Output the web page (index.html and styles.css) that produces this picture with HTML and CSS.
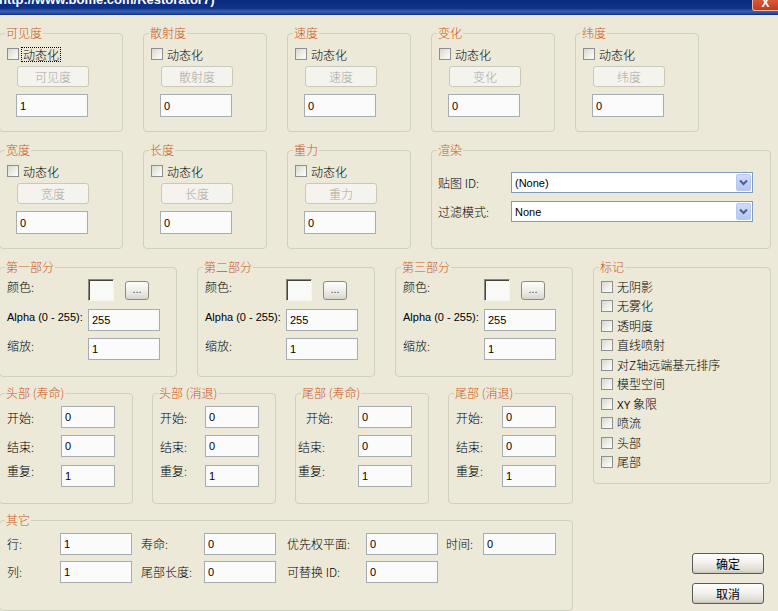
FILE: index.html
```html
<!DOCTYPE html>
<html lang="zh-CN">
<head>
<meta charset="utf-8">
<title>粒子发射器</title>
<link rel="stylesheet" href="styles.css">
</head>
<body>
<div class="titlebar">
  <span class="title">http://www.bome.com/Restorator7)</span>
  <span class="close">X</span>
</div>
<div class="dialog">
  <div class="row row1">
    <div class="group small">
      <span class="legend">可见度</span>
      <div class="chkline"><input type="checkbox" class="chk"><span class="chklabel focus">动态化</span></div>
      <button class="dbtn" disabled>可见度</button>
      <input class="edit e72 tall" value="1">
    </div>
    <div class="group small">
      <span class="legend">散射度</span>
      <div class="chkline"><input type="checkbox" class="chk"><span class="chklabel">动态化</span></div>
      <button class="dbtn" disabled>散射度</button>
      <input class="edit e72 tall" value="0">
    </div>
    <div class="group small">
      <span class="legend">速度</span>
      <div class="chkline"><input type="checkbox" class="chk"><span class="chklabel">动态化</span></div>
      <button class="dbtn" disabled>速度</button>
      <input class="edit e72 tall" value="0">
    </div>
    <div class="group small">
      <span class="legend">变化</span>
      <div class="chkline"><input type="checkbox" class="chk"><span class="chklabel">动态化</span></div>
      <button class="dbtn" disabled>变化</button>
      <input class="edit e72 tall" value="0">
    </div>
    <div class="group small">
      <span class="legend">纬度</span>
      <div class="chkline"><input type="checkbox" class="chk"><span class="chklabel">动态化</span></div>
      <button class="dbtn" disabled>纬度</button>
      <input class="edit e72 tall" value="0">
    </div>
  </div>

  <div class="row row2">
    <div class="group small">
      <span class="legend">宽度</span>
      <div class="chkline"><input type="checkbox" class="chk"><span class="chklabel">动态化</span></div>
      <button class="dbtn" disabled>宽度</button>
      <input class="edit e72 tall" value="0">
    </div>
    <div class="group small">
      <span class="legend">长度</span>
      <div class="chkline"><input type="checkbox" class="chk"><span class="chklabel">动态化</span></div>
      <button class="dbtn" disabled>长度</button>
      <input class="edit e72 tall" value="0">
    </div>
    <div class="group small">
      <span class="legend">重力</span>
      <div class="chkline"><input type="checkbox" class="chk"><span class="chklabel">动态化</span></div>
      <button class="dbtn" disabled>重力</button>
      <input class="edit e72 tall" value="0">
    </div>
    <div class="group render">
      <span class="legend">渲染</span>
      <div class="rline">
        <span class="rlabel">贴图 ID:</span>
        <div class="combo"><span class="combo-text">(None)</span><span class="drop"><svg width="9" height="7" viewBox="0 0 9 7"><path d="M1 1.5 L4.5 5 L8 1.5" fill="none" stroke="#4d6185" stroke-width="2"/></svg></span></div>
      </div>
      <div class="rline second">
        <span class="rlabel">过滤模式:</span>
        <div class="combo"><span class="combo-text">None</span><span class="drop"><svg width="9" height="7" viewBox="0 0 9 7"><path d="M1 1.5 L4.5 5 L8 1.5" fill="none" stroke="#4d6185" stroke-width="2"/></svg></span></div>
      </div>
    </div>
  </div>

  <div class="lower">
    <div class="leftcol">
      <div class="row row3">
        <div class="group part">
          <span class="legend">第一部分</span>
          <div class="prow"><span class="plabel">颜色:</span><span class="swatch"></span><button class="dots">...</button></div>
          <div class="prow pb"><span class="plabel latin">Alpha (0 - 255):</span><input class="edit e72" value="255"></div>
          <div class="prow pc"><span class="plabel">缩放:</span><input class="edit e72" value="1"></div>
        </div>
        <div class="group part">
          <span class="legend">第二部分</span>
          <div class="prow"><span class="plabel">颜色:</span><span class="swatch"></span><button class="dots">...</button></div>
          <div class="prow pb"><span class="plabel latin">Alpha (0 - 255):</span><input class="edit e72" value="255"></div>
          <div class="prow pc"><span class="plabel">缩放:</span><input class="edit e72" value="1"></div>
        </div>
        <div class="group part">
          <span class="legend">第三部分</span>
          <div class="prow"><span class="plabel">颜色:</span><span class="swatch"></span><button class="dots">...</button></div>
          <div class="prow pb"><span class="plabel latin">Alpha (0 - 255):</span><input class="edit e72" value="255"></div>
          <div class="prow pc"><span class="plabel">缩放:</span><input class="edit e72" value="1"></div>
        </div>
      </div>

      <div class="row row4">
        <div class="group seg w134">
          <span class="legend">头部 (寿命)</span>
          <div class="srow"><span class="slabel lw54">开始:</span><input class="edit e54" value="0"></div>
          <div class="srow s2"><span class="slabel lw54">结束:</span><input class="edit e54" value="0"></div>
          <div class="srow s3"><span class="slabel lw54">重复:</span><input class="edit e54" value="1"></div>
        </div>
        <div class="group seg w124">
          <span class="legend">头部 (消退)</span>
          <div class="srow"><span class="slabel lw45">开始:</span><input class="edit e54" value="0"></div>
          <div class="srow s2"><span class="slabel lw45">结束:</span><input class="edit e54" value="0"></div>
          <div class="srow s3"><span class="slabel lw45">重复:</span><input class="edit e54" value="1"></div>
        </div>
        <div class="group seg w134">
          <span class="legend">尾部 (寿命)</span>
          <div class="srow"><span class="slabel lw55 nudge-r">开始:</span><input class="edit e54" value="0"></div>
          <div class="srow s2"><span class="slabel lw55 nudge-l">结束:</span><input class="edit e54" value="0"></div>
          <div class="srow s3"><span class="slabel lw55 nudge-l">重复:</span><input class="edit e54" value="1"></div>
        </div>
        <div class="group seg w125">
          <span class="legend">尾部 (消退)</span>
          <div class="srow"><span class="slabel lw46">开始:</span><input class="edit e54" value="0"></div>
          <div class="srow s2"><span class="slabel lw46">结束:</span><input class="edit e54" value="0"></div>
          <div class="srow s3"><span class="slabel lw46">重复:</span><input class="edit e54" value="1"></div>
        </div>
      </div>

      <div class="group other">
        <span class="legend">其它</span>
        <div class="orow">
          <span class="olabel ow53">行:</span><input class="edit e72" value="1">
          <span class="olabel ow63 og9">寿命:</span><input class="edit e72" value="0">
          <span class="olabel ow79 og11">优先权平面:</span><input class="edit e72" value="0">
          <span class="olabel ow37 og8">时间:</span><input class="edit e73" value="0">
        </div>
        <div class="orow o2">
          <span class="olabel ow53">列:</span><input class="edit e72" value="1">
          <span class="olabel ow63 og9">尾部长度:</span><input class="edit e72" value="0">
          <span class="olabel ow79 og11">可替换 ID:</span><input class="edit e72" value="0">
        </div>
      </div>
    </div>

    <div class="rightcol">
      <div class="group flags">
        <span class="legend">标记</span>
        <div class="frow"><input type="checkbox" class="chk"><span class="flabel">无阴影</span></div>
        <div class="frow"><input type="checkbox" class="chk"><span class="flabel">无雾化</span></div>
        <div class="frow"><input type="checkbox" class="chk"><span class="flabel">透明度</span></div>
        <div class="frow"><input type="checkbox" class="chk"><span class="flabel">直线喷射</span></div>
        <div class="frow"><input type="checkbox" class="chk"><span class="flabel">对Z轴远端基元排序</span></div>
        <div class="frow"><input type="checkbox" class="chk"><span class="flabel">模型空间</span></div>
        <div class="frow"><input type="checkbox" class="chk"><span class="flabel"><span class="xy">XY</span> 象限</span></div>
        <div class="frow"><input type="checkbox" class="chk"><span class="flabel">喷流</span></div>
        <div class="frow"><input type="checkbox" class="chk"><span class="flabel">头部</span></div>
        <div class="frow"><input type="checkbox" class="chk"><span class="flabel">尾部</span></div>
      </div>
      <button class="pbtn ok">确定</button>
      <button class="pbtn cancel">取消</button>
    </div>
  </div>
</div>
</body>
</html>
```

FILE: styles.css
```css
* { box-sizing: border-box; }

html, body {
  margin: 0;
  padding: 0;
}

body {
  width: 778px;
  height: 611px;
  overflow: hidden;
  background: #ece9d8;
  font-family: "Noto Sans CJK SC", "Liberation Sans", sans-serif;
  font-size: 12px;
  font-weight: 300;
  color: #000;
}

/* ---------- title bar ---------- */
.titlebar {
  height: 15px;
  display: flex;
  align-items: flex-start;
  overflow: hidden;
  background: linear-gradient(#0a2a7c 0%, #0f3289 55%, #3a60b6 75%, #2a4fa6 88%, #0c2b7e 100%);
}

.title {
  flex: 1;
  margin-top: -8px;
  margin-left: -1px;
  font: bold 13px/16px "Liberation Sans", sans-serif;
  color: #fff;
  white-space: nowrap;
}

.close {
  width: 26px;
  height: 11px;
  background: linear-gradient(#d9593a, #c23b1c);
  border-left: 1px solid #f0b8a8;
  border-bottom: 1px solid #f0b8a8;
  border-radius: 0 0 0 3px;
  color: #fff;
  font: bold 12px/7px "Liberation Sans", sans-serif;
  text-align: center;
  overflow: hidden;
}

/* ---------- dialog layout ---------- */
.dialog {
  margin-left: -1px;
  padding-top: 18px;
}

.row {
  display: flex;
  gap: 20px;
}

.row2 { margin-top: 18px; }

.lower {
  display: flex;
  gap: 20px;
  margin-top: 18px;
}

.leftcol {
  width: 574px;
  flex: none;
}

.rightcol {
  width: 178px;
  flex: none;
  display: flex;
  flex-direction: column;
  align-items: flex-start;
}

/* ---------- group box ---------- */
.group {
  position: relative;
  flex: none;
  border: 1px solid #d0d0bf;
  border-radius: 4px;
}

.legend {
  position: absolute;
  left: 5px;
  top: -8px;
  padding: 0 1px;
  background: #ece9d8;
  color: #c8581a;
  font-size: 12px;
  line-height: 14px;
  white-space: nowrap;
}

/* ---------- controls ---------- */
.chk {
  -webkit-appearance: none;
  appearance: none;
  display: block;
  width: 12px;
  height: 12px;
  margin: 0;
  flex: none;
  border: 1px solid #8e8f8f;
  border-radius: 0;
  background: linear-gradient(135deg, #d8d8d2 0%, #eeeeea 55%, #fdfdfd 100%);
}

.edit {
  display: block;
  flex: none;
  height: 22px;
  margin: 0;
  padding: 0 0 0 3px;
  border: 1px solid #a5acb2;
  border-radius: 0;
  background: #fbfbfb;
  font: 11px "Liberation Sans", sans-serif;
  color: #000;
  outline: none;
}

.e72 { width: 72px; }
.e73 { width: 73px; }
.e54 { width: 54px; }
.edit.tall { height: 23px; }

/* ---------- small animated groups ---------- */
.small {
  width: 124px;
  height: 99px;
  display: flex;
  flex-direction: column;
  align-items: flex-start;
  padding: 14px 0 0 7px;
}

.chkline {
  display: flex;
  align-items: center;
  height: 12px;
}

.chklabel {
  margin-left: 3px;
  padding: 0 1px;
  line-height: 13px;
}

.focus {
  outline: 1px dotted #000;
  outline-offset: 0;
}

.dbtn {
  width: 72px;
  height: 21px;
  margin: 6px 0 0 10px;
  padding: 0;
  border: 1px solid #cac8bb;
  border-radius: 3px;
  background: #f4f3ee;
  color: #aca899;
  font-family: "Noto Sans CJK SC", sans-serif;
  font-size: 12px;
  font-weight: 300;
  line-height: 19px;
}

.small .edit {
  margin: 7px 0 0 9px;
}

/* ---------- render group ---------- */
.render {
  width: 340px;
  height: 99px;
  padding: 21px 0 0 6px;
}

.rline {
  display: flex;
  align-items: center;
  height: 21px;
}

.rline.second { margin-top: 8px; }

.rlabel {
  width: 73px;
  flex: none;
}

.combo {
  width: 242px;
  height: 21px;
  display: flex;
  align-items: center;
  justify-content: space-between;
  border: 1px solid #7f9db9;
  background: #fff;
  padding: 1px;
}

.combo-text {
  padding-left: 2px;
  font: 11px "Liberation Sans", sans-serif;
}

.drop {
  width: 15px;
  height: 17px;
  display: flex;
  align-items: center;
  justify-content: center;
  border: 1px solid #b6c8f0;
  border-radius: 2px;
  background: linear-gradient(#cfdcfb, #b3c7f4);
}

/* ---------- part groups ---------- */
.part {
  width: 178px;
  height: 110px;
  padding: 11px 0 0 7px;
}

.prow {
  display: flex;
  align-items: flex-start;
}

.prow.pb { margin-top: 8px; }
.prow.pc { margin-top: 7px; }

.plabel {
  width: 81px;
  flex: none;
  line-height: 14px;
  margin-top: 1px;
}

.plabel.latin {
  font: 11px/14px "Liberation Sans", sans-serif;
}

.swatch {
  width: 26px;
  height: 22px;
  flex: none;
  border: 1px solid;
  border-color: #8a877a #f6f5ef #f6f5ef #8a877a;
  box-shadow: inset 1px 1px 0 #45443e;
  background: #f9f9f7;
}

.dots {
  width: 24px;
  height: 19px;
  margin: 2px 0 0 11px;
  padding: 0 0 4px;
  border: 1px solid #8a8a86;
  border-radius: 3px;
  background: linear-gradient(#fdfdfb, #ecebe5 60%, #d9d5cb);
  font: 11px/1 "Liberation Sans", sans-serif;
  color: #444;
  display: flex;
  align-items: flex-end;
  justify-content: center;
}

/* ---------- segment groups ---------- */
.row4 {
  gap: 19px;
  margin-top: 16px;
}

.seg {
  height: 111px;
  padding: 12px 0 0 7px;
}

.w134 { width: 134px; }
.w124 { width: 124px; }
.w125 { width: 125px; }

.srow {
  display: flex;
  align-items: flex-start;
}

.srow.s2 { margin-top: 7px; }
.srow.s3 { margin-top: 8px; }

.slabel {
  flex: none;
  line-height: 14px;
  margin-top: 5px;
}

.srow.s3 .slabel { margin-top: -1px; }

.lw54 { width: 54px; }
.lw45 { width: 45px; }
.lw55 { width: 55px; }
.lw46 { width: 46px; }

.nudge-r { padding-left: 3px; }
.nudge-l { margin-left: -5px; width: 60px; }

/* ---------- other group ---------- */
.other {
  width: 574px;
  height: 91px;
  margin-top: 16px;
  padding: 12px 0 0 7px;
}

.orow {
  display: flex;
  align-items: center;
}

.orow.o2 { margin-top: 6px; }

.olabel {
  flex: none;
  line-height: 14px;
}

.ow53 { width: 53px; }
.ow63 { width: 63px; }
.ow79 { width: 79px; }
.ow37 { width: 37px; }
.og9 { margin-left: 9px; }
.og11 { margin-left: 11px; }
.og8 { margin-left: 8px; }

/* ---------- flags ---------- */
.flags {
  width: 178px;
  height: 217px;
  padding: 9px 0 0 7px;
}

.frow {
  display: flex;
  align-items: center;
  height: 19.5px;
}

.flabel {
  margin-left: 4px;
  line-height: 14px;
  white-space: nowrap;
}

.xy {
  font: 10px "Liberation Sans", sans-serif;
}

/* ---------- push buttons ---------- */
.pbtn {
  width: 72px;
  height: 21px;
  margin-left: 99px;
  padding: 0;
  border: 1px solid #5a5a58;
  border-radius: 3px;
  background: linear-gradient(#ffffff 0%, #f2f1ed 45%, #dedbd2 85%, #c9c5ba 100%);
  font-family: "Noto Sans CJK SC", sans-serif;
  font-size: 12px;
  font-weight: 400;
  line-height: 19px;
  color: #000;
}

.pbtn.ok { margin-top: 69px; }
.pbtn.cancel { margin-top: 9px; }
```
